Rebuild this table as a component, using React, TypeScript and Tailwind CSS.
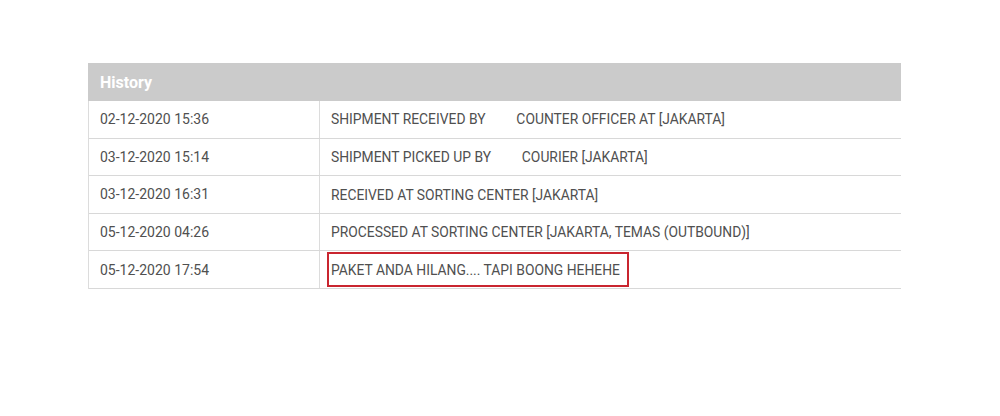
import React from "react";

const rows: { time: string; desc: string; mark?: boolean }[] = [
  { time: "02-12-2020 15:36", desc: "SHIPMENT RECEIVED BY         COUNTER OFFICER AT [JAKARTA]" },
  { time: "03-12-2020 15:14", desc: "SHIPMENT PICKED UP BY         COURIER [JAKARTA]" },
  { time: "03-12-2020 16:31", desc: "RECEIVED AT SORTING CENTER [JAKARTA]" },
  { time: "05-12-2020 04:26", desc: "PROCESSED AT SORTING CENTER [JAKARTA, TEMAS (OUTBOUND)]" },
  { time: "05-12-2020 17:54", desc: "PAKET ANDA HILANG.... TAPI BOONG HEHEHE", mark: true },
];

export default function App() {
  return (
    <div className="w-[1000px] h-[416px] bg-white pt-[63px] pl-[88px] font-['Roboto',sans-serif]">
      <div className="w-[813px]">
        <div className="h-[38px] bg-[#cbcbcb] flex items-center pl-[12px] pt-[2px] text-white font-bold text-[16px]">
          History
        </div>
        <div className="border-l border-[#dcdcdc]">
          {rows.map((r) => (
            <div key={r.time} className="flex h-[37.6px] border-b border-[#d8d8d8] text-[14px] text-[#505050]">
              <div className="w-[231px] shrink-0 border-r border-[#dcdcdc] flex items-center pl-[11px] pt-[1px]">
                {r.time}
              </div>
              <div className="relative flex-1 flex items-center pl-[11px] pt-[1px] whitespace-pre text-[13.85px]">
                {r.desc}
                {r.mark && (
                  <div className="absolute left-[7px] top-[1px] bottom-[1px] w-[302px] border-2 border-[#c9252f]" />
                )}
              </div>
            </div>
          ))}
        </div>
      </div>
    </div>
  );
}
